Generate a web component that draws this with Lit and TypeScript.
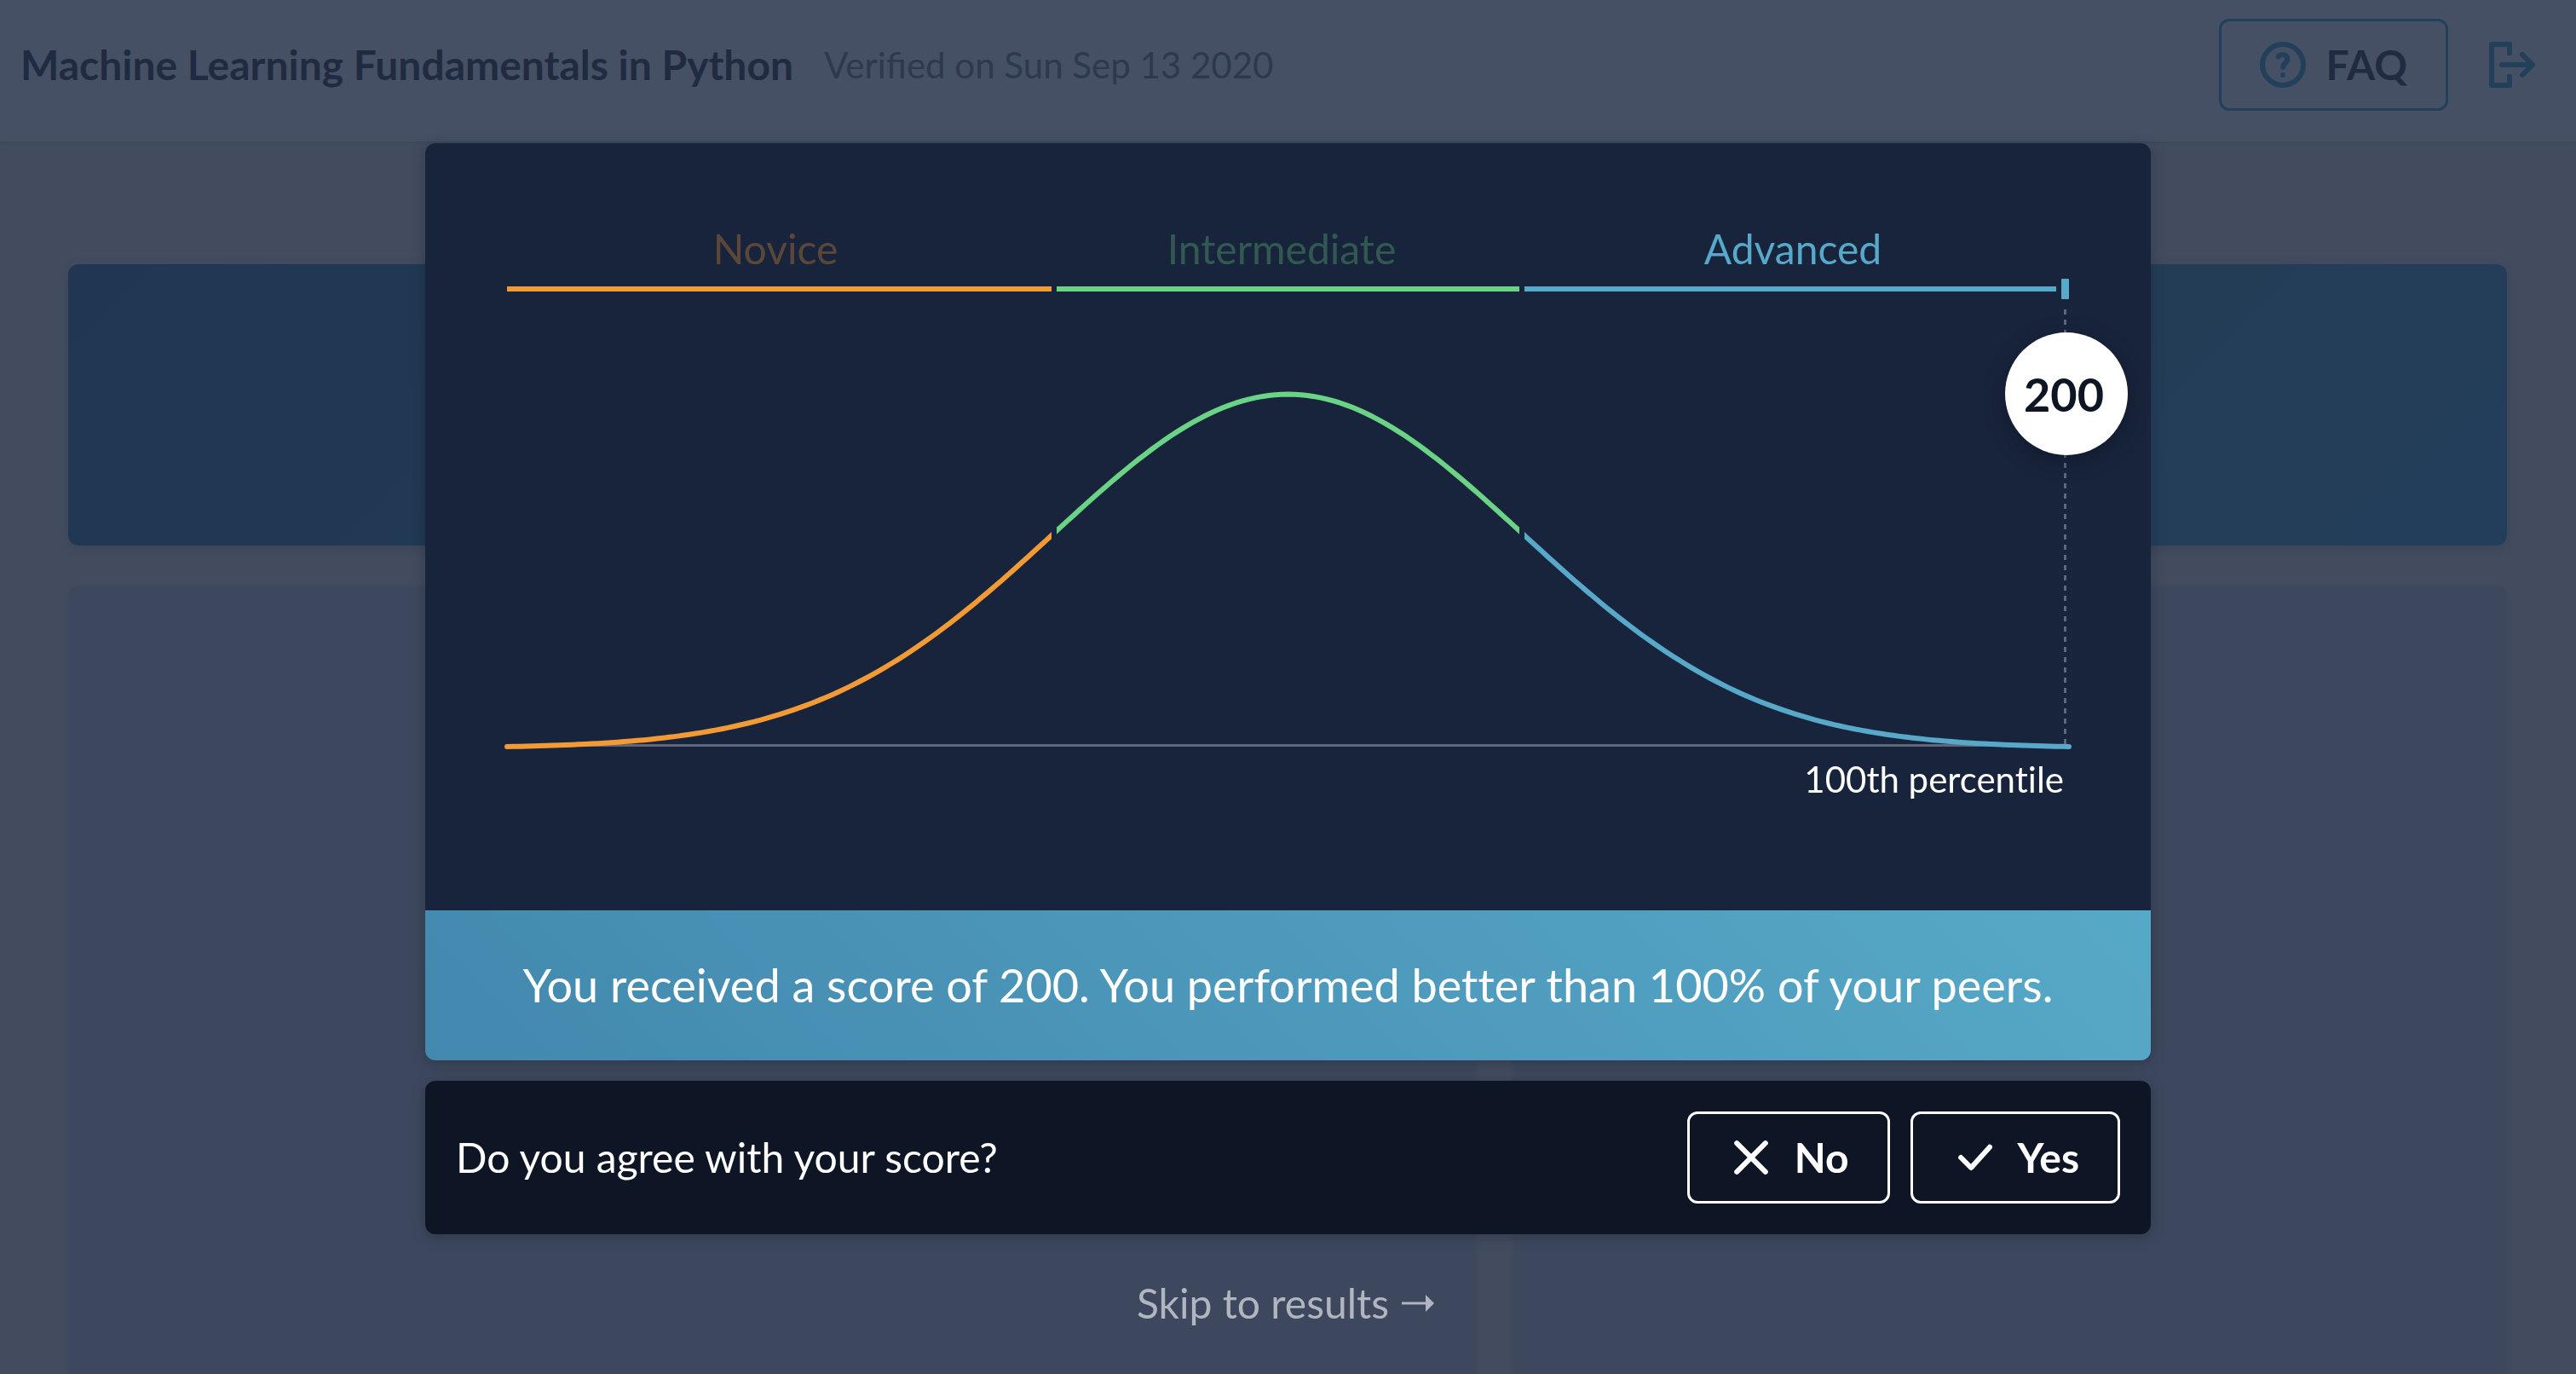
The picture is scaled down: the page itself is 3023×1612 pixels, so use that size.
import { LitElement, html, svg, css } from "lit";
import { customElement } from "lit/decorators.js";

interface Level {
  name: string;
  color: string;
  from: number;
  to: number;
  labelX: number;
  active: boolean;
}

const LEVELS: Level[] = [
  { name: "Novice", color: "#f29a36", from: 0, to: 639, labelX: 315, active: false },
  { name: "Intermediate", color: "#6bd385", from: 645, to: 1188, labelX: 909, active: false },
  { name: "Advanced", color: "#57a8c9", from: 1194, to: 1818, labelX: 1509, active: true },
];

const CHART_WIDTH = 1833;
const BASELINE = 612;
const PEAK = 415;
const SIGMA = 275;
const SCORE = 200;

/** Bell curve over the full chart width, lowered so that both tails end on the baseline. */
function bellPath(): string {
  const mid = CHART_WIDTH / 2;
  const bell = (d: number) => PEAK * Math.exp(-(d * d) / (2 * SIGMA * SIGMA));
  const tail = bell(mid);
  const points: string[] = [];
  for (let i = 0; i <= 240; i++) {
    const x = (CHART_WIDTH * i) / 240;
    const y = BASELINE - bell(x - mid) + tail;
    points.push(`${x.toFixed(1)} ${y.toFixed(2)}`);
  }
  return "M" + points.join("L");
}

const icon = (content: unknown) => html`<svg
  class="icon"
  viewBox="0 0 18 18"
  fill="none"
  stroke="currentColor"
  stroke-width="2"
  stroke-linecap="round"
  stroke-linejoin="round"
  aria-hidden="true"
>${content}</svg>`;

const helpIcon = () => icon(svg`
  <circle cx="9" cy="9" r="8"></circle>
  <path d="M7.2 5.8C7.6 5.2 8.2 5 8.9 5C10 5 10.8 5.8 10.8 6.9C10.8 8.4 9 8.5 9 9.9"></path>
  <circle cx="9" cy="13" r="1" fill="currentColor" stroke="none"></circle>`);

const exitIcon = () => icon(svg`
  <path d="M8 4.4V1H1V17H8V13.6"></path>
  <path d="M5 9H17M13 5L17 9L13 13"></path>`);

const crossIcon = () => icon(svg`<path d="M3.4 3.4L14.6 14.6M14.6 3.4L3.4 14.6"></path>`);

const checkIcon = () => icon(svg`<path d="M3.7 9L7.7 13L15 4.9"></path>`);

@customElement("score-chart")
export class ScoreChart extends LitElement {
  static styles = css`
    :host {
      display: block;
    }
    .chart {
      display: block;
      width: 100%;
      height: auto;
      overflow: visible;
      font-family: Lato, "Liberation Sans", sans-serif;
      font-variant-ligatures: none;
    }
    .level {
      font-size: 48px;
      text-anchor: middle;
    }
    .faded {
      opacity: 0.3;
    }
    .axis {
      stroke: #5e6677;
      stroke-width: 3;
    }
    .marker {
      stroke-dasharray: 6 6;
    }
    .badge {
      fill: #fff;
      filter: drop-shadow(0 6px 12px rgba(5, 10, 25, 0.4));
    }
    .score {
      font-size: 54px;
      font-weight: 700;
      fill: #0e1524;
      text-anchor: middle;
    }
    .percentile {
      font-size: 42px;
      fill: #fff;
      text-anchor: end;
    }
  `;

  render() {
    const path = bellPath();
    return html`
      <svg class="chart" viewBox="0 0 ${CHART_WIDTH} 708" role="img" aria-label="Score distribution">
        <defs>
          ${LEVELS.map((level, i) => {
            const from = i === 0 ? -3 : level.from;
            const to = i === LEVELS.length - 1 ? CHART_WIDTH + 3 : level.to;
            return svg`<clipPath id=${"part-" + i}>
              <rect x=${from} y="0" width=${to - from} height="708"></rect>
            </clipPath>`;
          })}
        </defs>
        ${LEVELS.map(
          (level) => svg`
            <text class=${level.active ? "level" : "level faded"} x=${level.labelX} y="46" fill=${level.color}>${level.name}</text>
            <rect x=${level.from} y="72" width=${level.to - level.from} height="6" fill=${level.color}></rect>`
        )}
        <rect x="1824" y="63" width="9" height="24" rx="1" fill="#57a8c9"></rect>
        <line class="axis" x1="0" y1="610.5" x2=${CHART_WIDTH} y2="610.5"></line>
        <line class="axis marker" x1="1828.5" y1="99" x2="1828.5" y2="610"></line>
        ${LEVELS.map(
          (level, i) => svg`<path
            d=${path}
            fill="none"
            stroke=${level.color}
            stroke-width="6"
            stroke-linecap="round"
            stroke-linejoin="round"
            clip-path=${`url(#part-${i})`}
          ></path>`
        )}
        <circle class="badge" cx="1830" cy="198" r="72"></circle>
        <text class="score" x="1827" y="219">${SCORE}</text>
        <text class="percentile" x="1827" y="666">100th percentile</text>
      </svg>
    `;
  }
}

@customElement("app-root")
export class AppRoot extends LitElement {
  static styles = css`
    :host {
      display: block;
      font-family: Lato, "Liberation Sans", sans-serif;
      font-size: 48px;
      line-height: 66px;
      font-variant-ligatures: none;
    }
    * {
      box-sizing: border-box;
    }
    .page {
      display: flex;
      flex-direction: column;
      min-height: 100vh;
      background: #434c5f;
    }
    .header {
      display: flex;
      align-items: center;
      gap: 36px;
      padding: 22px 48px 36px 24px;
      background: #455064;
      box-shadow: 0 1px 3px rgba(31, 42, 64, 0.2);
      color: #202b42;
    }
    .title {
      margin: 0;
      font-size: 48px;
      font-weight: 700;
    }
    .verified {
      flex: 1;
      font-size: 42px;
      font-variant-ligatures: normal;
      color: #2d394f;
    }
    .actions {
      display: flex;
      align-items: center;
      gap: 48px;
    }
    .icon {
      display: block;
      flex: none;
      width: 54px;
      height: 54px;
      overflow: visible;
    }
    .button {
      display: flex;
      align-items: center;
      gap: 24px;
      height: 108px;
      padding: 0 45px;
      border: 3px solid currentColor;
      border-radius: 12px;
      background: transparent;
      color: #fff;
      font: inherit;
      font-weight: 700;
    }
    .faq {
      color: #23405b;
    }
    .faq-label {
      color: #202b42;
    }
    .logout {
      padding: 0;
      border: 0;
      background: transparent;
      color: #23405b;
    }
    .content {
      display: flex;
      flex: 1;
      flex-direction: column;
      gap: 48px;
      padding: 144px 81px 0 80px;
    }
    .hero {
      height: 330px;
      border-radius: 12px;
      background: linear-gradient(135deg, #213653, #203a54 30%, #243d57 80%, #233e5b);
      box-shadow: 0 3px 12px rgba(31, 42, 64, 0.2);
    }
    .columns {
      display: flex;
      flex: 1;
      gap: 46px;
    }
    .panel {
      border-radius: 12px 12px 0 0;
      background: #3d485e;
      box-shadow: 0 3px 6px rgba(31, 42, 64, 0.1);
    }
    .wide {
      flex: 17;
    }
    .narrow {
      flex: 12;
    }
    .overlay {
      position: fixed;
      inset: 0;
      display: flex;
      flex-direction: column;
      align-items: center;
      gap: 24px;
      padding-top: 168px;
    }
    .card {
      width: 100%;
      max-width: 2025px;
      border-radius: 12px;
      overflow: hidden;
      box-shadow: 0 3px 15px rgba(20, 28, 40, 0.35);
      color: #fff;
    }
    .graph {
      padding: 96px;
      background: #18243b;
    }
    .banner {
      margin: 0;
      padding: 55px 96px;
      background: linear-gradient(45deg, #4388ae, #57a9c8);
      font-size: 54px;
      text-align: center;
    }
    .feedback {
      display: flex;
      align-items: center;
      gap: 24px;
      padding: 36px;
      background: #0e1524;
    }
    .question {
      flex: 1;
      margin: 0;
    }
    .skip {
      display: flex;
      align-items: center;
      gap: 15px;
      padding: 24px 30px 24px 24px;
      border: 0;
      background: transparent;
      color: #b1b5bf;
      font: inherit;
    }
    .arrow {
      display: block;
      width: 38px;
      height: 20px;
    }
  `;

  render() {
    return html`
      <div class="page">
        <header class="header">
          <h1 class="title">Machine Learning Fundamentals in Python</h1>
          <span class="verified">Verified on Sun Sep 13 2020</span>
          <div class="actions">
            <button class="button faq">${helpIcon()}<span class="faq-label">FAQ</span></button>
            <button class="logout" aria-label="Exit">${exitIcon()}</button>
          </div>
        </header>
        <main class="content">
          <section class="hero"></section>
          <div class="columns">
            <section class="panel wide"></section>
            <section class="panel narrow"></section>
          </div>
        </main>
      </div>
      <div class="overlay" role="dialog" aria-label="Your score">
        <section class="card">
          <div class="graph"><score-chart></score-chart></div>
          <p class="banner">You received a score of 200. You performed better than 100% of your peers.</p>
        </section>
        <section class="card feedback">
          <p class="question">Do you agree with your score?</p>
          <button class="button">${crossIcon()}<span>No</span></button>
          <button class="button">${checkIcon()}<span>Yes</span></button>
        </section>
        <button class="skip">
          <span>Skip to results</span>
          <svg class="arrow" viewBox="0 0 38 20" fill="currentColor" aria-hidden="true">
            <path d="M0 8.5H28V0L38 10L28 20V11.5H0Z"></path>
          </svg>
        </button>
      </div>
    `;
  }
}
